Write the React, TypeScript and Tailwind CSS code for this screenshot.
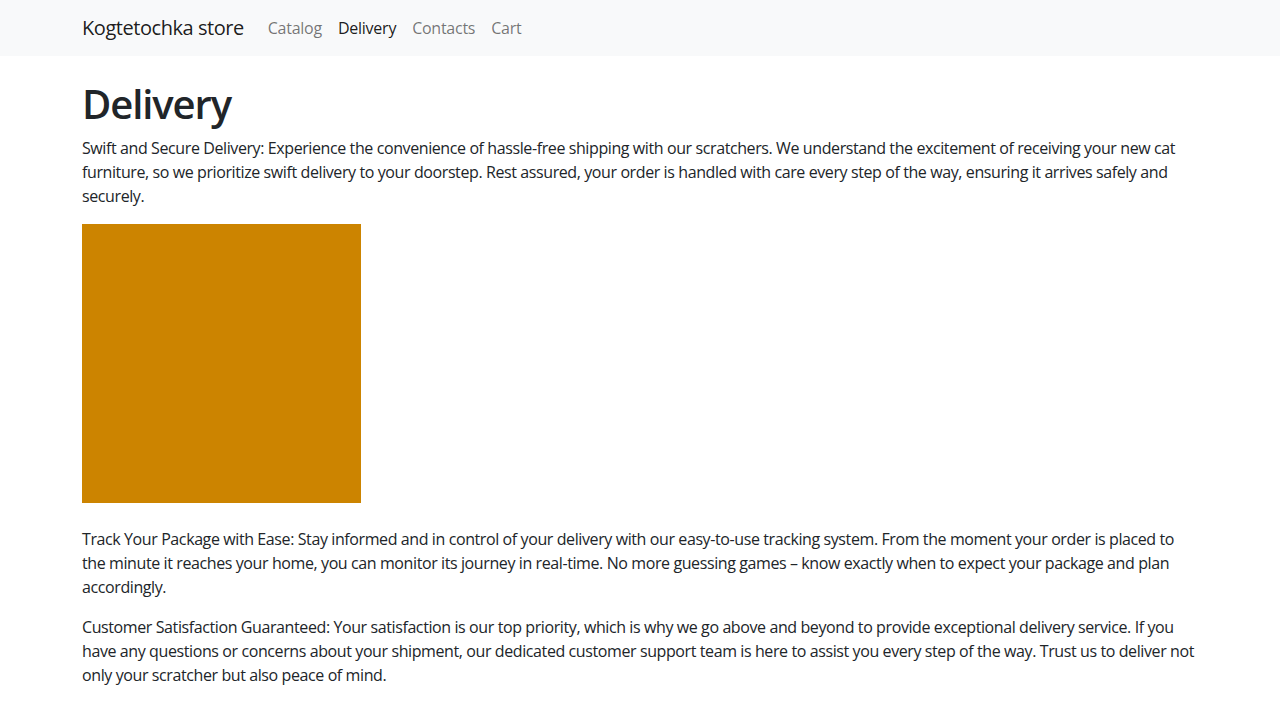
import React from "react";

const links = [
  { label: "Catalog", active: false },
  { label: "Delivery", active: true },
  { label: "Contacts", active: false },
  { label: "Cart", active: false },
];

export default function App(): JSX.Element {
  return (
    <div className="min-h-screen bg-white font-['Open_Sans',sans-serif] tracking-[-0.4px] text-[#212529]">
      <nav className="h-14 bg-[#f8f9fa]">
        <div className="mx-auto flex h-full max-w-[1140px] items-center px-3">
          <a className="mr-4 text-[20px] leading-[30px] tracking-[-0.45px] text-black/90">
            Kogtetochka store
          </a>
          <ul className="flex">
            {links.map(({ label, active }) => (
              <li key={label}>
                <a
                  className={
                    active
                      ? "block px-2 py-2 text-base tracking-[-0.25px] text-black/90"
                      : "block px-2 py-2 text-base tracking-[-0.25px] text-black/55"
                  }
                >
                  {label}
                </a>
              </li>
            ))}
          </ul>
        </div>
      </nav>

      <main className="mx-auto mt-6 max-w-[1140px] px-3 text-base leading-6">
        <h1 className="mb-2 text-[40px] font-semibold leading-[48px] tracking-[-1.1px]">Delivery</h1>
        <p className="mb-4">
          Swift and Secure Delivery: Experience the convenience of hassle-free shipping with our
          scratchers. We understand the excitement of receiving your new cat furniture, so we
          prioritize swift delivery to your doorstep. Rest assured, your order is handled with care
          every step of the way, ensuring it arrives safely and securely.
        </p>
        <div className="mb-6 h-[279px] w-[279px] bg-[#cc8400]" />
        <p className="mb-4">
          Track Your Package with Ease: Stay informed and in control of your delivery with our
          easy-to-use tracking system. From the moment your order is placed to the minute it reaches
          your home, you can monitor its journey in real-time. No more guessing games – know exactly
          when to expect your package and plan accordingly.
        </p>
        <p className="mb-4">
          Customer Satisfaction Guaranteed: Your satisfaction is our top priority, which is why we go
          above and beyond to provide exceptional delivery service. If you have any questions or
          concerns about your shipment, our dedicated customer support team is here to assist you
          every step of the way. Trust us to deliver not only your scratcher but also peace of mind.
        </p>
      </main>
    </div>
  );
}
